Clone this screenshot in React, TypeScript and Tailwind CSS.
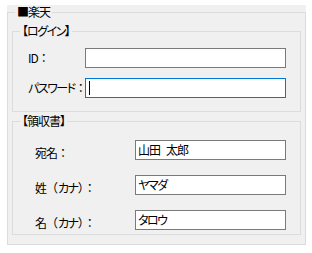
import type { ReactNode } from 'react';

// full-width punctuation keeps its full cell, kana/brackets go proportional and tighter
function jp(text: string) {
  return Array.from(text).map((ch, i) =>
    '（）：'.includes(ch) ? (
      <span key={i} className="[font-feature-settings:normal] tracking-normal">
        {ch}
      </span>
    ) : ch === '　' ? (
      <span key={i} className="tracking-[-6px]">
        {ch}
      </span>
    ) : /[\u30a0-\u30ff]/.test(ch) ? (
      <span key={i} className="tracking-[-1.5px]">
        {ch}
      </span>
    ) : (
      ch
    )
  );
}

function GroupBox({ title, className, children }: { title: string; className: string; children?: ReactNode }) {
  return (
    <div className={`relative border border-[#dcdcdc] ${className}`}>
      <span className="absolute left-[7px] top-[-8px] bg-[#f0f0f0] px-[2px] leading-[14px] whitespace-nowrap">
        {jp(title)}
      </span>
      {children}
    </div>
  );
}

function TextBox({ value, focused, width }: { value?: string; focused?: boolean; width: string }) {
  return (
    <div
      className={`flex h-[20px] items-center bg-white pl-[2px] leading-[18px] whitespace-nowrap ${width} ${
        focused ? 'border border-[#0078d7]' : 'border border-[#7a7a7a]'
      }`}
    >
      {focused && <span className="ml-[1px] h-[14px] w-px bg-black" />}
      {value && jp(value)}
    </div>
  );
}

function Row({ label, labelWidth, children, low }: { label: string; labelWidth: string; children: ReactNode; low?: boolean }) {
  return (
    <div className="flex items-center">
      <span className={`${labelWidth} shrink-0 whitespace-nowrap ${low ? 'pt-[7px]' : ''}`}>{jp(label)}</span>
      {children}
    </div>
  );
}

export default function App() {
  return (
    <div className="h-[253px] w-[312px] bg-white pl-[7px] pt-[5px] font-['Noto_Sans_CJK_JP','Noto_Sans',sans-serif] text-[12px] text-black tracking-[-1px] [font-feature-settings:'palt']">
      <div className="flex h-[240px] w-[299px] flex-col bg-[#f0f0f0] pt-[7px]">
        <GroupBox title="■楽天" className="flex-1 px-[4px] pt-[18px]">
          <GroupBox title="【ログイン】" className="h-[81px] pl-[15px] pt-[16px]">
            <div className="flex flex-col gap-[10px]">
              <Row label="ID：" labelWidth="w-[57px]">
                <TextBox width="w-[201px]" />
              </Row>
              <Row label="パスワード：" labelWidth="w-[57px]">
                <TextBox width="w-[201px]" focused />
              </Row>
            </div>
          </GroupBox>
          <GroupBox title="【領収書】" className="mt-[9px] h-[114px] pl-[22px] pt-[15px]">
            <div className="flex flex-col gap-[10px]">
              <Row label="宛名：" labelWidth="w-[100px]" low>
                <TextBox width="w-[151px]" value="山田　太郎" />
              </Row>
              <Row label="姓（カナ）：" labelWidth="w-[100px]" low>
                <TextBox width="w-[151px]" value="ヤマダ" />
              </Row>
              <Row label="名（カナ）：" labelWidth="w-[100px]" low>
                <TextBox width="w-[151px]" value="タロウ" />
              </Row>
            </div>
          </GroupBox>
        </GroupBox>
      </div>
    </div>
  );
}
